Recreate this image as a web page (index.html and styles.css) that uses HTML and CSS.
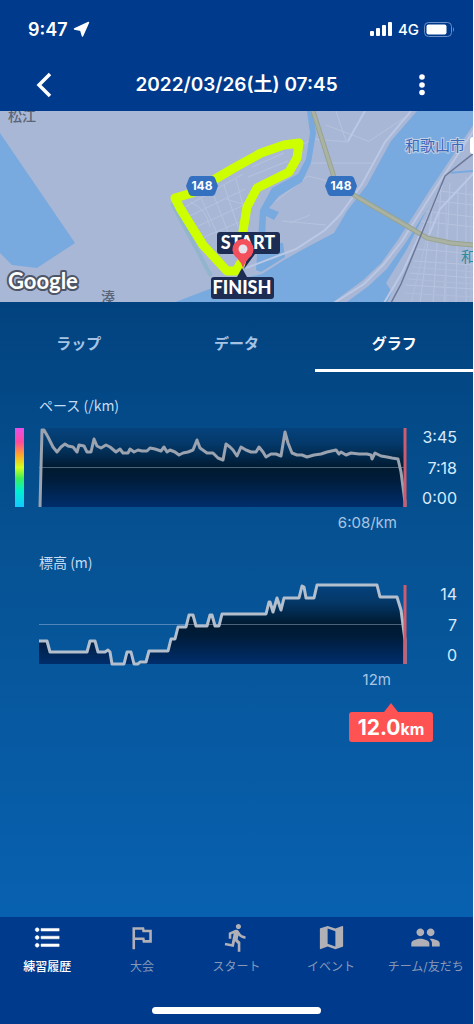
FILE: index.html
```html
<!DOCTYPE html>
<html lang="ja">
<head>
  <meta charset="UTF-8">
  <meta name="viewport" content="width=device-width, initial-scale=1.0">
  <title>2022/03/26(土) 07:45</title>
  <link rel="stylesheet" href="styles.css">
</head>
<body>
  <!-- Status bar -->
  <div class="status-bar">
    <div class="status-left">
      <span class="clock">9:47</span>
      <svg width="17" height="17" viewBox="0 0 17 17"><path d="M15.500 1.500 9.500 15 7.800 9.200 1.500 8z" fill="#fff" stroke="#fff" stroke-width="1.500" stroke-linejoin="round"/></svg>
    </div>
    <div class="status-right">
      <svg width="23" height="14" viewBox="0 0 23 14" fill="#fff">
        <rect x="0" y="9" width="4" height="5" rx="1"/>
        <rect x="6" y="6" width="4" height="8" rx="1"/>
        <rect x="12" y="3" width="4" height="11" rx="1"/>
        <rect x="18" y="0" width="4" height="14" rx="1"/>
      </svg>
      <span class="network">4G</span>
      <svg width="31" height="15" viewBox="0 0 31 15">
        <rect x=".5" y=".5" width="27" height="14" rx="4" fill="none" stroke="#6d8fc6"/>
        <rect x="2.500" y="2.500" width="20" height="10" rx="2" fill="#fff"/>
        <path d="M29 5q2 2.500 0 5z" fill="#6d8fc6"/>
      </svg>
    </div>
  </div>

  <header class="header">
    <button class="icon-btn" aria-label="戻る">
      <svg width="16" height="26" viewBox="0 0 16 26"><path d="M14 2 3 13l11 11" fill="none" stroke="#fff" stroke-width="3.500"/></svg>
    </button>
    <h1>2022/03/26(土) 07:45</h1>
    <button class="icon-btn menu-btn" aria-label="メニュー">
      <svg width="6" height="22" viewBox="0 0 6 22" fill="#fff"><circle cx="3" cy="3" r="2.800"/><circle cx="3" cy="11" r="2.800"/><circle cx="3" cy="18.500" r="2.800"/></svg>
    </button>
  </header>

  <!-- Course map -->
  <div class="map">
    <svg viewBox="0 0 473 191" preserveAspectRatio="xMidYMid slice">
      <rect width="474" height="192" fill="#a9b7d6"/>

      <!-- side streets -->
      <g fill="none" stroke="#b6c3df" stroke-width="1">
        <path d="M185 96l58-33M190 105l55-27M196 116l48-22M204 126l38-16M201 87l20 44M212 80l18 46M224 74l14 42M236 68l8 30M252 56l32-14M248 66l40-16M190 91q16 6 20 25M226 88l20 6"/>
        <path d="M297 36l16-8 36 3M306 52h66M326 14l42 16M368 31l42-28M336 0l10 30M282 110l44 4M276 90l32-25 40 10M290 112l20-8"/>
        <path d="M424 100l50 6M420 110l54 6M417 138l57 5M414 150l60 4M410 162l64 5M406 174l68 4M440 80l34 4M436 90l38 4M432 100l-12 92M441 78l-8 114M450 72l-6 120M458 80l-2 112M466 66v126"/>
        <path d="M412 156l62 5M408 168l66 5M404 182l70 4M427 126l-16 66M446 90v102M471 80v112" stroke="#b1bedb"/>
      </g>

      <!-- water -->
      <g fill="#79aadf">
        <path d="M0 22 75 132 37 157 12 154 0 142z"/>
        <path d="M417 0 391 30 367 74 347 100 334 122 311 134 284 149 262 163 240 168 212 177 173 192H387L392 181 386 172 407 138 434 85 474 24V0z"/>
        <path d="M307 0h6l3 22-5 30-9 19-23 14-10 12 10 4-5 8-8-4-1 27 18 0 2 14-24 15-5-2 4-60 12-22 26-14 8-15 4-26z"/>
      </g>
      <path d="M434 78 448 62 474 60" fill="none" stroke="#79aadf" stroke-width="2"/>
      <path d="M172 92 211 165" stroke="#91b5cb" stroke-width="4"/>

      <!-- river banks and bridges -->
      <path d="M478 14 434 80 402 130 384 155 366 172 336 194" fill="none" stroke="#a9b7d6" stroke-width="8"/>
      <g fill="none" stroke="#bac8e5" stroke-width="2">
        <path d="M476 16 433 81 402 130 383 154 364 173 334 192"/>
        <path d="M411 0 385 31 362 73 340 104 325 119 296 138 246 157"/>
        <path d="M442 74 429 104 403 160 384 192M474 62 440 98 429 124"/>
        <path d="M365 0 348 30"/>
      </g>

      <path d="M313 0 334 66 341 75 357 86 407 115 427 127 451 132 474 134" fill="none" stroke="#98a38f" stroke-width="5"/>
      <path d="M313 0 334 66 341 75 357 86 407 115 427 127 451 132 474 134" fill="none" stroke="#aab3a3" stroke-width="3"/>
      <path d="M474 42 445 65 401 173 391 192" fill="none" stroke="#6c7897" stroke-width="1.500"/>

      <!-- running course -->
      <path d="M243 138 243 120 247 96 257 77 289 61 297 47 299 32 284 34 261 42 234 57 217 67 192 82 175 87 180 97 203 134 227 160 236 160 243 148" fill="none" stroke="#ceff00" stroke-width="9" stroke-linejoin="round"/>

      <!-- route shields -->
      <g fill="#3470c0">
        <path d="M192 65h20q2 0 3 2l3 8-3 8q-1 2-3 2h-20q-2 0-3-2l-3-8 3-8q1-2 3-2z"/>
        <path d="M331 65h20q2 0 3 2l3 8-3 8q-1 2-3 2h-20q-2 0-3-2l-3-8 3-8q1-2 3-2z"/>
      </g>
      <g class="shield-text">
        <text x="202" y="79">148</text>
        <text x="341" y="79">148</text>
      </g>

      <g class="place">
        <text x="8" y="10">松江</text>
        <text x="101" y="191">湊</text>
      </g>
      <text class="place-city" x="405" y="40">和歌山市</text>
      <text class="place-station" x="461" y="151">和</text>
      <rect x="470" y="26" width="12" height="17" rx="3" fill="#fff"/>
      <text class="google" x="8" y="178">Google</text>

      <!-- start / finish -->
      <rect x="217" y="121" width="63" height="22" rx="3" fill="#1c2c53"/>
      <text class="flag-text" x="248" y="138">START</text>
      <path d="M248 143h7l-11 15z" fill="#1c2c53"/>
      <path d="M242 157l5 9h-10z" fill="#1c2c53"/>
      <rect x="211" y="166" width="63" height="22" rx="3" fill="#1c2c53"/>
      <text class="flag-text" x="242" y="183">FINISH</text>
      <path d="M243 157q-2-6-6-10a10.500 10.500 0 1 1 12 0q-4 4-6 10z" fill="#f4505c"/>
      <circle cx="243" cy="138" r="4.500" fill="#e5e2ec"/>
    </svg>
  </div>

  <main class="panel">
    <div class="tabs" role="tablist">
      <button class="tab" role="tab">ラップ</button>
      <button class="tab" role="tab">データ</button>
      <button class="tab active" role="tab" aria-selected="true">グラフ</button>
    </div>

    <div class="charts">
      <!-- Pace -->
      <section class="chart">
        <h2>ペース (/km)</h2>
        <div class="chart-row">
          <div class="pace-scale"></div>
          <svg class="plot" viewBox="0 0 368 79" preserveAspectRatio="none">
            <defs>
              <linearGradient id="depth" x1="0" y1="0" x2="0" y2="79" gradientUnits="userSpaceOnUse">
                <stop offset="0" stop-color="#05427c"/>
                <stop offset=".2" stop-color="#04396a"/>
                <stop offset=".5" stop-color="#001a30"/>
                <stop offset=".65" stop-color="#001c3a"/>
                <stop offset="1" stop-color="#002e6c"/>
              </linearGradient>
            </defs>
            <path d="M3 0H366V79H0z" fill="url(#depth)"/>
            <path class="mid" d="M0 39.500H366"/>
            <polyline class="line" points="1,79 2,39 3,2 5,2 9,9 14,19 18,24 22,19 26,16 29,18 34,19 38,24 40,17 45,18 48,24 52,24 55,11 58,18 62,20 67,17 71,19 77,24 81,21 84,25 89,25 91,21 95,24 99,22 103,23 108,23 111,20 116,21 122,23 125,19 128,24 131,22 136,24 140,27 144,25 149,24 154,22 158,12 161,20 168,25 174,25 179,30 184,32 187,16 191,19 194,22 198,28 202,19 207,22 212,24 217,24 220,19 224,24 227,29 232,26 237,26 242,28 246,4 249,15 253,25 258,27 263,27 268,29 275,27 282,26 288,24 297,22 300,26 302,24 307,27 312,25 320,26 328,26 332,27 333,31 336,25 342,28 348,29 353,30 359,31 362,44 366,74 366,79"/>
            <path class="cursor" d="M366 0V79"/>
          </svg>
          <div class="axis"><span>3:45</span><span>7:18</span><span>0:00</span></div>
        </div>
        <p class="reading">6:08/km</p>
      </section>

      <!-- Elevation -->
      <section class="chart">
        <h2>標高 (m)</h2>
        <div class="chart-row">
          <svg class="plot" viewBox="0 0 368 79" preserveAspectRatio="none">
            <path d="M0 56H8L11 67H48L51 56H56L59 67H66L69 65 71 67 73 78H85L88 67H92L95 78H99L101 77H107L110 66H129L132 54H136L139 42H147L150 30H154L157 41H168L172 30 176 41H180L183 29H227L230 17 234 27 238 13 242 25 245 13H260L263 1 267 13H275L278 1H338L341 12H358L362 25 366 55V79H0z" fill="url(#depth)"/>
            <path class="mid" d="M0 39.500H366"/>
            <polyline class="line light" points="0,56 8,56 11,67 48,67 51,56 56,56 59,67 66,67 69,65 71,67 73,79 85,79 88,67 92,67 95,79 99,79 101,77 107,77 110,66 129,66 132,54 136,54 139,42 147,42 150,30 154,30 157,41 168,41 171,30 173,30 176,41 180,41 183,29 227,29 230,17 231,17 234,27 238,13 242,25 245,13 260,13 263,1 265,2 267,13 275,13 278,0 338,0 341,12 358,12 362,25 366,55 366,79"/>
            <path class="cursor" d="M366 0V79"/>
          </svg>
          <div class="axis"><span>14</span><span>7</span><span>0</span></div>
        </div>
        <p class="reading elevation">12m</p>
      </section>

      <div class="distance">12.0<small>km</small></div>
    </div>
  </main>

  <footer class="footer">
    <nav class="nav">
      <a href="#" class="nav-item active">
        <svg viewBox="0 0 24 24"><path d="M4 10.500c-.83 0-1.500.67-1.500 1.500s.67 1.500 1.500 1.500 1.500-.67 1.500-1.500-.67-1.500-1.500-1.500zm0-6c-.83 0-1.500.67-1.500 1.500S3.170 7.500 4 7.500 5.500 6.830 5.500 6 4.830 4.500 4 4.500zm0 12c-.83 0-1.500.68-1.500 1.500s.68 1.500 1.500 1.500 1.500-.68 1.500-1.500-.67-1.500-1.500-1.500zM7 19h14v-2H7v2zm0-6h14v-2H7v2zm0-8v2h14V5H7z" stroke="#fff" stroke-width=".4"/></svg>
        練習履歴
      </a>
      <a href="#" class="nav-item">
        <svg viewBox="0 0 24 24"><path d="M12.360 6l.4 2H18v6h-3.360l-.4-2H7V6h5.360M14 4H5v17h2v-7h5.600l.4 2h7V6h-5.600L14 4z"/></svg>
        大会
      </a>
      <a href="#" class="nav-item">
        <svg viewBox="0 0 24 24"><path d="M13.490 5.480c1.100 0 2-.9 2-2s-.9-2-2-2-2 .9-2 2 .9 2 2 2zm-3.600 13.900l1-4.400 2.100 2v6h2v-7.500l-2.100-2 .6-3c1.300 1.500 3.300 2.500 5.500 2.500v-2c-1.900 0-3.500-1-4.300-2.400l-1-1.600c-.4-.6-1-1-1.700-1-.3 0-.5.1-.8.1l-5.200 2.200v4.700h2v-3.400l1.800-.7-1.600 8.100-4.900-1-.4 2 7 1.400z"/></svg>
        スタート
      </a>
      <a href="#" class="nav-item">
        <svg viewBox="0 0 24 24"><path d="M20.500 3l-.16.03L15 5.100 9 3 3.360 4.900c-.21.07-.36.25-.36.48V20.500c0 .28.22.5.5.5l.16-.03L9 18.900l6 2.100 5.640-1.900c.21-.07.36-.25.36-.48V3.500c0-.28-.22-.5-.5-.5zM15 19l-6-2.110V5l6 2.110V19z"/></svg>
        イベント
      </a>
      <a href="#" class="nav-item">
        <svg viewBox="0 0 24 24"><path d="M16 11c1.660 0 2.990-1.340 2.990-3S17.660 5 16 5c-1.660 0-3 1.340-3 3s1.340 3 3 3zm-8 0c1.660 0 2.990-1.340 2.990-3S9.660 5 8 5C6.340 5 5 6.340 5 8s1.340 3 3 3zm0 2c-2.330 0-7 1.170-7 3.500V19h14v-2.500c0-2.330-4.670-3.500-7-3.500zm8 0c-.29 0-.62.02-.97.05 1.160.84 1.970 1.970 1.970 3.450V19h6v-2.500c0-2.330-4.670-3.500-7-3.500z"/></svg>
        チーム/友だち
      </a>
    </nav>
    <div class="home-indicator"></div>
  </footer>
</body>
</html>
```

FILE: styles.css
```css
* {
  box-sizing: border-box;
}
body {
  margin: 0;
  min-height: 100vh;
  display: flex;
  flex-direction: column;
  background-color: #003a8d;
  border-right: 1px solid #fff;
  color: #fff;
  font-family: Inter, "Noto Sans CJK JP", sans-serif;
}
button {
  padding: 0;
  border: none;
  background: none;
  color: inherit;
  font: inherit;
  cursor: pointer;
}
svg {
  display: block;
}

/* Status bar */
.status-bar {
  display: flex;
  justify-content: space-between;
  align-items: center;
  height: 58px;
  padding: 0 18px 0 28px;
}
.status-left,
.status-right {
  display: flex;
  align-items: center;
  gap: 5px;
}
.clock {
  font-size: 18px;
  font-weight: 600;
}
.network {
  font-size: 15px;
  font-weight: 500;
}

/* Header */
.header {
  display: flex;
  justify-content: space-between;
  align-items: center;
  height: 53px;
  padding: 0 28px;
}
.header h1 {
  margin: 0;
  padding-bottom: 4px;
  font-size: 19px;
  font-weight: 600;
}
.icon-btn {
  display: flex;
  justify-content: center;
  align-items: center;
  width: 32px;
  height: 40px;
}
.menu-btn {
  justify-content: flex-start;
  padding-left: 6px;
}

/* Map */
.map svg {
  width: 100%;
  height: 191px;
}
.shield-text {
  fill: #fff;
  font-size: 12px;
  font-weight: 700;
  text-anchor: middle;
}
.place {
  fill: #5a6678;
  font-size: 14px;
  font-weight: 500;
}
.place-city {
  fill: #3d68b8;
  stroke: #c3cfe8;
  stroke-width: 2px;
  paint-order: stroke;
  font-size: 15px;
}
.place-station {
  fill: #2a8c9c;
  font-size: 15px;
}
.google {
  fill: #fff;
  stroke: #4d5566;
  stroke-width: 4px;
  stroke-linejoin: round;
  paint-order: stroke;
  font-family: Lato, sans-serif;
  font-size: 22px;
  font-weight: 700;
}
.flag-text {
  fill: #fff;
  font-family: Lato, sans-serif;
  font-size: 18px;
  font-weight: 900;
  text-anchor: middle;
}

/* Tabs */
.panel {
  flex: 1;
  background: linear-gradient(#02437f, #065293 40%, #0861b0);
}
.tabs {
  display: flex;
}
.tab {
  flex: 1;
  height: 70px;
  padding-top: 13px;
  border-bottom: 3px solid transparent;
  color: #a6c3e6;
  font-size: 15px;
  font-weight: 700;
}
.tab.active {
  border-bottom-color: #fff;
  color: #fff;
}

/* Charts */
.charts {
  padding: 23px 16px 0 39px;
}
.chart {
  margin-bottom: 19px;
}
.chart h2 {
  margin: 0 0 13px;
  color: #c5dcf5;
  font-family: "Noto Sans CJK JP", sans-serif;
  font-size: 14px;
  font-weight: 400;
  line-height: 20px;
}
.chart-row {
  display: flex;
  height: 79px;
}
.pace-scale {
  width: 9px;
  margin-left: -24px;
  margin-right: 15px;
  background: linear-gradient(#e650e6, #ff4a9c 18%, #ffa52a 34%, #d2ff1e 50%, #3cf05a 64%, #00f0d2 80%, #14c8ff);
}
.plot {
  flex: 1;
  min-width: 0;
  height: 79px;
  overflow: visible;
}
.line {
  fill: none;
  stroke: #9aa3af;
  stroke-width: 3px;
  stroke-linejoin: round;
}
.line.light {
  stroke: #b4bfce;
}
.mid {
  stroke: rgba(190, 210, 235, 0.4);
}
.cursor {
  stroke: #cf5b6c;
  stroke-width: 3px;
}
.axis {
  display: flex;
  flex-direction: column;
  justify-content: space-between;
  width: 50px;
  color: #d8ebfc;
  font-size: 16px;
  line-height: 18px;
  text-align: right;
}
.reading {
  margin: 6px 60px 0 0;
  color: #a9c5e3;
  font-size: 15px;
  line-height: 20px;
  text-align: right;
}
.reading.elevation {
  margin-right: 66px;
}
.distance {
  position: relative;
  width: 84px;
  height: 30px;
  margin: 22px 24px 0 auto;
  border-radius: 3px;
  background-color: #ff5252;
  font-size: 21px;
  font-weight: 700;
  line-height: 31px;
  text-align: center;
}
.distance::before {
  content: "";
  position: absolute;
  left: 50%;
  bottom: 100%;
  margin-left: -7px;
  border: 7px solid transparent;
  border-top: none;
  border-bottom: 9px solid #ff5252;
}
.distance small {
  font-size: 16px;
}

/* Bottom navigation */
.footer {
  height: 107px;
  padding-top: 5px;
}
.nav {
  display: flex;
}
.nav-item {
  flex: 1;
  display: flex;
  flex-direction: column;
  align-items: center;
  gap: 5px;
  color: #8798b5;
  font-size: 12px;
  line-height: 18px;
  text-decoration: none;
  white-space: nowrap;
}
.nav-item svg {
  width: 31px;
  height: 31px;
  fill: #b0b0b6;
}
.nav-item.active {
  color: #fff;
  font-weight: 500;
}
.nav-item.active svg {
  fill: #fff;
}
.home-indicator {
  width: 169px;
  height: 7px;
  margin: 31px auto 0;
  border-radius: 4px;
  background-color: #fff;
}
```
